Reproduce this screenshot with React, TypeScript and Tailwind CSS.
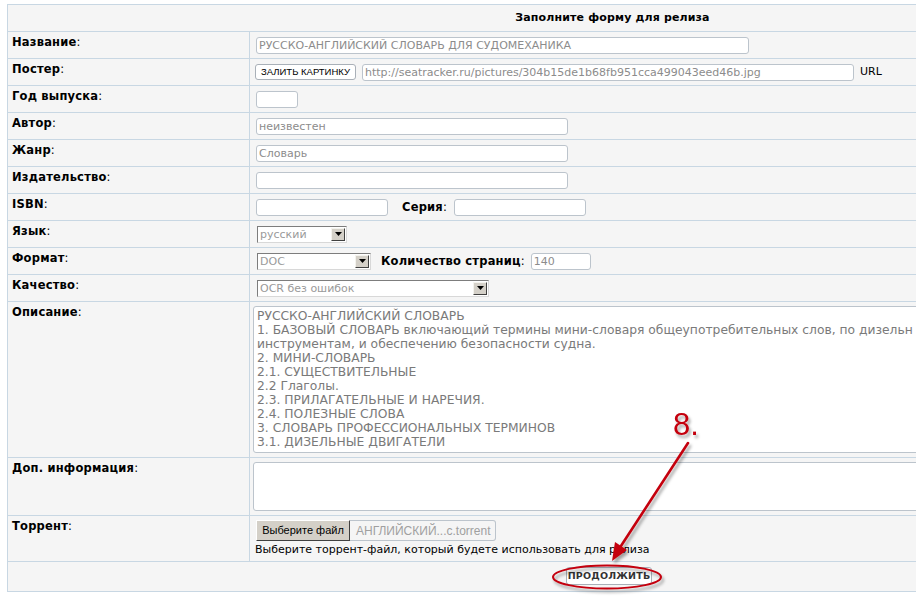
import type { ReactNode } from 'react'

const font = { fontFamily: '"DejaVu Sans", Verdana, sans-serif' }

function Label({ text }: { text: string }) {
  return (
    <span className="text-[11.5px] font-bold leading-[14px] tracking-[0.2px] text-black">
      {text}
      <span className="font-normal">:</span>
    </span>
  )
}

function Row({
  label,
  h,
  top,
  children,
}: {
  label: string
  h: string
  top?: boolean
  children: ReactNode
}) {
  return (
    <div className={`flex border-b border-[#c8d7e3] ${h}`}>
      <div className="w-[242px] shrink-0 border-r border-[#c8d7e3] pl-[4px] pt-[3px] text-[11px] leading-[14px]">
        <Label text={label} />
      </div>
      <div className={top ? 'flex-1 pl-[3px] pt-[4px]' : 'flex flex-1 items-center pl-[6px]'}>
        {children}
      </div>
    </div>
  )
}

function Field({ w, value = '' }: { w: string; value?: string }) {
  return (
    <input
      readOnly
      value={value}
      className={`h-[17px] rounded-[3px] border border-[#bcc4cc] bg-white px-[2px] text-[11px] leading-[15px] text-[#8c8c8c] outline-none ${w}`}
    />
  )
}

function Select({ w, value }: { w: string; value: string }) {
  return (
    <div
      className={`ml-[1px] flex h-[17px] items-center border border-t-[#7d7d7d] border-l-[#7d7d7d] border-r-[#d8d8d8] border-b-[#d8d8d8] bg-white ${w}`}
    >
      <span className="flex-1 pl-[2px] text-[11px] leading-[15px] text-[#9a9a9a]">{value}</span>
      <span className="mr-[1px] flex h-[13px] w-[14px] items-center justify-center border border-t-[#f4f3ee] border-l-[#f4f3ee] border-r-[#404040] border-b-[#404040] bg-[#d4d0c8]">
        <svg width="7" height="4" viewBox="0 0 7 4">
          <path d="M0 0h7L3.5 4z" fill="#000" />
        </svg>
      </span>
    </div>
  )
}

const description = [
  'РУССКО-АНГЛИЙСКИЙ СЛОВАРЬ',
  '1. БАЗОВЫЙ СЛОВАРЬ включающий термины мини-словаря общеупотребительных слов, по дизельн',
  'инструментам, и обеспечению безопасности судна.',
  '2. МИНИ-СЛОВАРЬ',
  '2.1. СУЩЕСТВИТЕЛЬНЫЕ',
  '2.2 Глаголы.',
  '2.3. ПРИЛАГАТЕЛЬНЫЕ И НАРЕЧИЯ.',
  '2.4. ПОЛЕЗНЫЕ СЛОВА',
  '3. СЛОВАРЬ ПРОФЕССИОНАЛЬНЫХ ТЕРМИНОВ',
  '3.1. ДИЗЕЛЬНЫЕ ДВИГАТЕЛИ',
]

function Annotation() {
  return (
    <svg
      className="pointer-events-none absolute left-0 top-0"
      width="916"
      height="598"
      viewBox="0 0 916 598"
    >
      <defs>
        <filter id="sh" x="-20%" y="-20%" width="140%" height="140%">
          <feDropShadow dx="2" dy="3" stdDeviation="1.6" floodColor="#000" floodOpacity="0.35" />
        </filter>
      </defs>
      <g filter="url(#sh)">
        <text
          x="673"
          y="435"
          fontSize="31"
          fill="#c4000f"
          style={{ fontFamily: '"Liberation Sans", Arial, sans-serif' }}
        >
          8.
        </text>
        <line x1="688" y1="443" x2="619" y2="549" stroke="#c4000f" strokeWidth="2.6" strokeLinecap="round" />
        <polygon points="612,561 627,550 615,542" fill="#c4000f" />
        <ellipse cx="607" cy="577" rx="54" ry="11.5" fill="none" stroke="#c4000f" strokeWidth="2" />
      </g>
    </svg>
  )
}

export default function App() {
  return (
    <div className="relative h-[598px] w-[916px] overflow-hidden bg-white pl-[7px] pt-[4px]" style={font}>
      <div className="w-[1210px] border-l border-t border-[#c8d7e3] bg-[#f5f5f5]">
        <div className="flex h-[27px] items-center justify-center border-b border-[#c8d7e3] pt-[1px] text-[11px] font-bold tracking-[0.15px] text-black">
          Заполните форму для релиза
        </div>

        <Row label="Название" h="h-[27px]">
          <Field w="w-[493px]" value="РУССКО-АНГЛИЙСКИЙ СЛОВАРЬ ДЛЯ СУДОМЕХАНИКА" />
        </Row>

        <Row label="Постер" h="h-[27px]">
          <button
            type="button"
            className="-ml-[1px] h-[16px] w-[101px] rounded-[3px] border border-[#a9b0b8] bg-white text-[9.5px] leading-[14px] text-black"
            style={{ fontFamily: '"Liberation Sans", Arial, sans-serif' }}
          >
            ЗАЛИТЬ КАРТИНКУ
          </button>
          <span className="ml-[6px] flex">
            <Field w="w-[492px]" value="http://seatracker.ru/pictures/304b15de1b68fb951cca499043eed46b.jpg" />
          </span>
          <span className="ml-[6px] text-[11px] text-black">URL</span>
        </Row>

        <Row label="Год выпуска" h="h-[27px]">
          <Field w="w-[42px]" />
        </Row>

        <Row label="Автор" h="h-[27px]">
          <Field w="w-[312px]" value="неизвестен" />
        </Row>

        <Row label="Жанр" h="h-[27px]">
          <Field w="w-[312px]" value="Словарь" />
        </Row>

        <Row label="Издательство" h="h-[27px]">
          <Field w="w-[312px]" />
        </Row>

        <Row label="ISBN" h="h-[27px]">
          <Field w="w-[132px]" />
          <span className="ml-[14px] mr-[7px] flex leading-[14px]">
            <Label text="Серия" />
          </span>
          <Field w="w-[132px]" />
        </Row>

        <Row label="Язык" h="h-[27px]">
          <Select w="w-[90px]" value="русский" />
        </Row>

        <Row label="Формат" h="h-[27px]">
          <Select w="w-[114px]" value="DOC" />
          <span className="ml-[10px] mr-[6px] flex leading-[14px]">
            <Label text="Количество страниц" />
          </span>
          <Field w="w-[60px]" value="140" />
        </Row>

        <Row label="Качество" h="h-[27px]">
          <Select w="w-[232px]" value="OCR без ошибок" />
        </Row>

        <Row label="Описание" h="h-[156px]" top>
          <div className="h-[147px] w-[956px] overflow-hidden whitespace-nowrap rounded-[3px] border border-[#bcc4cc] bg-white pl-[3px] pt-[2px] text-[12.3px] leading-[14px] text-[#7a7a7a]">
            {description.map((line) => (
              <div key={line}>{line}</div>
            ))}
          </div>
        </Row>

        <Row label="Доп. информация" h="h-[58px]" top>
          <div className="h-[49px] w-[956px] rounded-[3px] border border-[#bcc4cc] bg-white" />
        </Row>

        <Row label="Торрент" h="h-[46px]" top>
          <div className="pl-[3px]">
            <div className="flex h-[21px] items-stretch" style={{ fontFamily: '"Liberation Sans", Arial, sans-serif' }}>
              <button
                type="button"
                className="w-[94px] border border-t-[#ffffff] border-l-[#ffffff] border-r-[#404040] border-b-[#404040] bg-[#d4d0c8] text-[11px] text-black"
              >
                Выберите файл
              </button>
              <span className="flex w-[146px] items-center rounded-r-[3px] border border-l-0 border-[#bcc4cc] pl-[6px] text-[12px] text-[#a0a0a0]">
                АНГЛИЙСКИЙ...c.torrent
              </span>
            </div>
            <div className="-ml-[1px] mt-[2px] text-[11px] leading-[14px] text-black">
              Выберите торрент-файл, который будете использовать для релиза
            </div>
          </div>
        </Row>

        <div className="flex h-[30px] justify-center border-b border-[#c8d7e3] pr-[7px] pt-[5px]">
          <button
            type="button"
            className="h-[18px] w-[86px] rounded-[3px] border border-[#a9b0b8] bg-white text-[9.5px] font-bold leading-[16px] tracking-[0.2px] text-[#333333]"
          >
            ПРОДОЛЖИТЬ
          </button>
        </div>
      </div>
      <Annotation />
    </div>
  )
}
